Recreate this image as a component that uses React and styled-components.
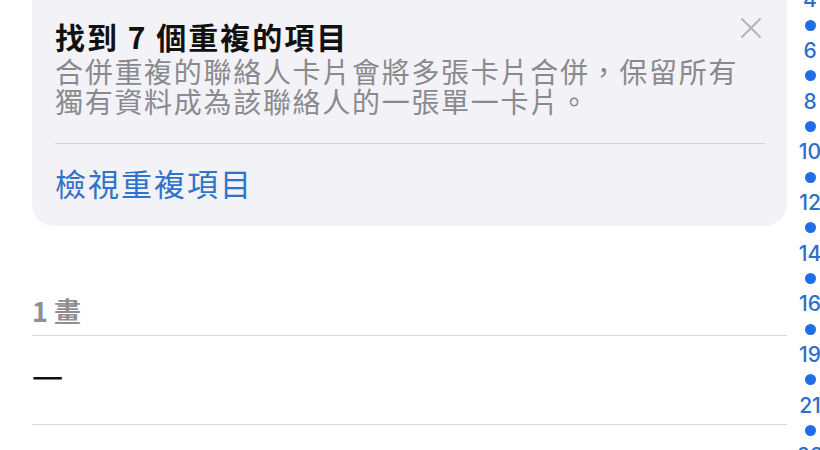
import React from "react";
import styled, { createGlobalStyle } from "styled-components";

const GlobalStyle = createGlobalStyle`
    html, body {
        margin: 0;
        padding: 0;
        background: #ffffff;
        overflow: hidden;
    }
    body {
        font-family: "Noto Sans CJK TC", "Noto Sans", sans-serif;
        -webkit-font-smoothing: antialiased;
    }
`;

const Page = styled.div`
    display: flex;
    width: 820px;
    height: 450px;
    overflow: hidden;
`;

const Main = styled.div`
    width: 755px;
    margin-left: 32px;
    flex-shrink: 0;
`;

const Card = styled.div`
    position: relative;
    margin-top: -20px;
    padding: 38px 22px 23px 23px;
    background: #f2f2f7;
    border-radius: 22px;
`;

const Title = styled.h1`
    margin: 0;
    font-size: 30px;
    line-height: 36px;
    font-weight: 700;
    color: #111111;
    letter-spacing: 2px;
`;

const Desc = styled.p`
    margin: 2px 0 0 0;
    font-size: 28px;
    line-height: 30px;
    color: #8a8a8e;
    letter-spacing: 1.7px;
`;

const Divider = styled.div`
    height: 1px;
    background: ${(p) => p.color || "#d4d4d8"};
    margin-top: ${(p) => p.top || 0}px;
`;

const Link = styled.div`
    margin-top: 19px;
    font-size: 31px;
    line-height: 40px;
    color: #2f74c8;
    letter-spacing: 2px;
`;

const Close = styled.button`
    position: absolute;
    top: 36px;
    right: 24px;
    width: 24px;
    height: 24px;
    padding: 0;
    border: 0;
    background: none;
    svg {
        display: block;
    }
`;

const SectionHeader = styled.div`
    margin-top: 70px;
    padding-bottom: 9px;
    font-size: 27px;
    line-height: 30px;
    font-weight: 700;
    color: #8e8e93;
    border-bottom: 1px solid #d9d9dc;
`;

const Row = styled.div`
    padding: 26px 0 32px 0;
    font-size: 31px;
    line-height: 30px;
    color: #111111;
    border-bottom: 1px solid #d9d9dc;
`;

const IndexBar = styled.div`
    width: 46px;
    margin-top: -13px;
    display: flex;
    flex-direction: column;
    align-items: center;
    flex-shrink: 0;
`;

const IndexItem = styled.div`
    height: 25.35px;
    flex-shrink: 0;
    display: flex;
    align-items: center;
    justify-content: center;
    font-family: "Inter", "Noto Sans", sans-serif;
    font-size: 21px;
    font-weight: 500;
    color: #2d6fcb;
    white-space: nowrap;
`;

const Dot = styled.span`
    width: 11px;
    height: 11px;
    border-radius: 50%;
    background: #1f6fe8;
`;

const indexLabels = ["4", "6", "8", "10", "12", "14", "16", "19", "21", "23"];

function App() {
    return (
        <>
            <GlobalStyle />
            <Page>
                <Main>
                    <Card>
                        <Close aria-label="關閉">
                            <svg width="24" height="24" viewBox="0 0 24 24">
                                <path d="M3 3 L21 21 M21 3 L3 21" stroke="#b4b4b9" strokeWidth="2" strokeLinecap="round" />
                            </svg>
                        </Close>
                        <Title>找到 7 個重複的項目</Title>
                        <Desc>
                            合併重複的聯絡人卡片會將多張卡片合併，保留所有
                            <br />
                            獨有資料成為該聯絡人的一張單一卡片。
                        </Desc>
                        <Divider top={27} />
                        <Link>檢視重複項目</Link>
                    </Card>
                    <SectionHeader>1 畫</SectionHeader>
                    <Row>一</Row>
                </Main>
                <IndexBar>
                    {indexLabels.map((label, i) => (
                        <React.Fragment key={label}>
                            <IndexItem>{label}</IndexItem>
                            {i < indexLabels.length - 1 && (
                                <IndexItem>
                                    <Dot />
                                </IndexItem>
                            )}
                        </React.Fragment>
                    ))}
                </IndexBar>
            </Page>
        </>
    );
}

export default App;
